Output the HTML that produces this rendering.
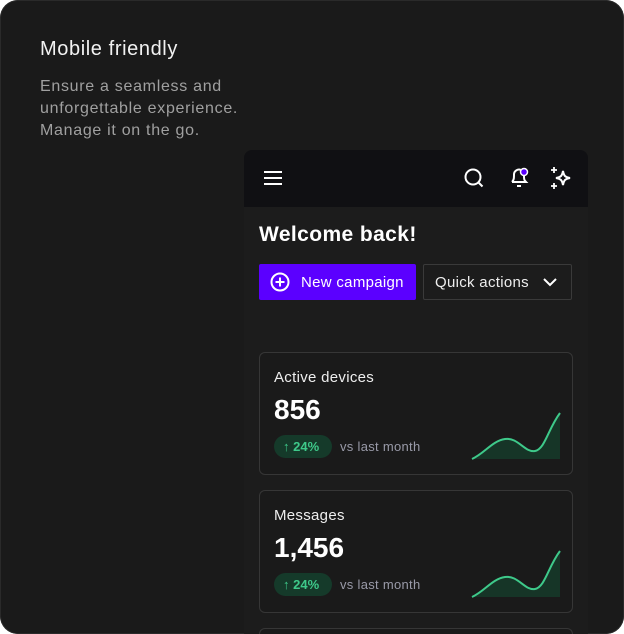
<!DOCTYPE html>
<html><head><style>
*{margin:0;padding:0;box-sizing:border-box}
body{width:624px;height:634px;background:#fff;font-family:"Liberation Sans",sans-serif;overflow:hidden}
.outer{position:absolute;left:0;top:0;width:624px;height:634px;background:#1a1a1a;border-radius:18px;box-shadow:inset 0 0 0 1px #2a2a2a;overflow:hidden}
h1{position:absolute;left:40px;top:38px;color:#f2f2f2;font-size:20px;font-weight:normal;letter-spacing:0.6px}
.sub{position:absolute;left:40px;top:76px;color:#a0a0a0;font-size:16px;line-height:22px;letter-spacing:0.7px}
.phone{position:absolute;left:244px;top:150px;width:344px;height:484px;background:#1c1c1c;border-radius:8px 8px 0 0;overflow:hidden}
.hdr{height:57px;background:#101013}
.wel{position:absolute;left:15px;top:73px;color:#fff;font-size:21px;font-weight:bold;letter-spacing:0.4px}
.btn1{position:absolute;left:15px;top:114px;width:157px;height:36px;background:#5b00ff;border-radius:2px;color:#fff;font-size:15px;line-height:37px;padding-left:42px;letter-spacing:0.3px}
.btn2{position:absolute;left:179px;top:114px;width:149px;height:36px;border:1px solid #3a3a3a;border-radius:2px;color:#eee;font-size:15px;line-height:35px;padding-left:11px;letter-spacing:0.3px}
.card{position:absolute;left:15px;width:314px;height:123px;border:1px solid #363636;border-radius:6px;background:#1a1a1a}
.card .t{position:absolute;left:14px;top:16px;color:#eee;font-size:15px;letter-spacing:0.3px}
.card .n{position:absolute;left:14px;top:41px;color:#fff;font-size:28px;font-weight:bold}
.pill{position:absolute;left:14px;top:82px;width:58px;height:23px;border-radius:12px;background:#153a2a;color:#3ec98a;font-size:13px;line-height:23px;padding-left:9px;font-weight:bold}
.vs{position:absolute;left:80px;top:86px;color:#999aa8;font-size:13px;letter-spacing:0.3px}
svg.sp{position:absolute;left:210px;top:58px}
</style></head><body>
<div class="outer">
<h1>Mobile friendly</h1>
<div class="sub">Ensure a seamless and<br>unforgettable experience.<br>Manage it on the go.</div>
<div class="phone">
<div class="hdr"></div>
<svg style="position:absolute;left:19px;top:20px" width="20" height="16" stroke="#fff" stroke-width="2"><path d="M1 2h18M1 8h18M1 14h18"/></svg>
<svg style="position:absolute;left:219px;top:17px" width="22" height="22" fill="none" stroke="#fff" stroke-width="2"><circle cx="10" cy="10" r="7.5"/><path d="M15.5 15.5l4 4"/></svg>
<svg style="position:absolute;left:264px;top:16px" width="22" height="24" fill="none" stroke="#fff" stroke-width="2"><path d="M4 16c2-2 2-4 2-8a5 5 0 0 1 7-4M16 10c0 3 0 4 2 6H4M9 20h4"/><circle cx="16" cy="6" r="3.5" fill="#5b00ff" stroke="#fff" stroke-width="1.5"/></svg>
<svg style="position:absolute;left:306px;top:16px" width="24" height="24" fill="none" stroke="#fff" stroke-width="2"><path d="M13 5c1 5 2 6 7 7-5 1-6 2-7 7-1-5-2-6-7-7 5-1 6-2 7-7z"/><path d="M4 1v6M1 4h6M4 17v6M1 20h6" stroke-width="1.8"/></svg>
<div class="wel">Welcome back!</div>
<div class="btn1">New campaign<svg style="position:absolute;left:11px;top:8px" width="20" height="20" fill="none" stroke="#fff" stroke-width="2"><circle cx="10" cy="10" r="8.5"/><path d="M10 5.5v9M5.5 10h9"/></svg></div>
<div class="btn2">Quick actions<svg style="position:absolute;left:119px;top:12px" width="14" height="10" fill="none" stroke="#fff" stroke-width="2"><path d="M1 2l6 6 6-6"/></svg></div>
<div class="card" style="top:202px"><div class="t">Active devices</div><div class="n">856</div><div class="pill">↑ 24%</div><div class="vs">vs last month</div>
<svg class="sp" width="92" height="50"><path d="M2 48C15 42 22 30 35 28S55 42 65 40 78 18 90 2V48z" fill="#163527"/><path d="M2 48C15 42 22 30 35 28S55 42 65 40 78 18 90 2" fill="none" stroke="#3ec98a" stroke-width="2"/></svg></div>
<div class="card" style="top:340px"><div class="t">Messages</div><div class="n">1,456</div><div class="pill">↑ 24%</div><div class="vs">vs last month</div>
<svg class="sp" width="92" height="50"><path d="M2 48C15 42 22 30 35 28S55 42 65 40 78 18 90 2V48z" fill="#163527"/><path d="M2 48C15 42 22 30 35 28S55 42 65 40 78 18 90 2" fill="none" stroke="#3ec98a" stroke-width="2"/></svg></div>
<div class="card" style="top:478px;height:20px;border-bottom:none;border-radius:6px 6px 0 0"></div>
</div>
</div>
</body></html>
